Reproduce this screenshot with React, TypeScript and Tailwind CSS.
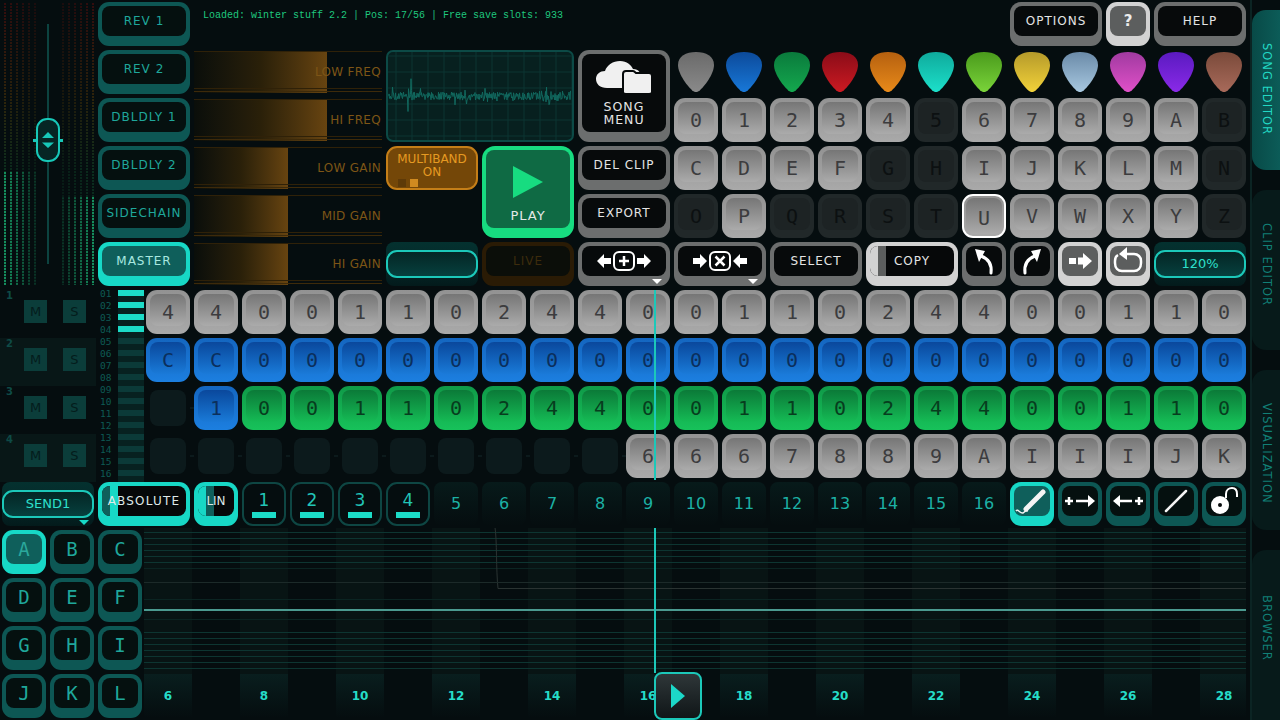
import React from 'react'

type Kind = 'gray' | 'dim' | 'blue' | 'green' | 'empty'

const KEY_STYLES: Record<Kind, { outer: string; face: string; text: string }> = {
  gray: { outer: 'bg-linear-to-b from-[#929292] to-[#a9a9a9]', face: 'bg-linear-to-b from-[#767676] to-[#ababab]', text: 'text-[#3c3c3e]' },
  dim: { outer: 'bg-[#212829]', face: 'bg-[#1d2324]', text: 'text-[#0c1011]' },
  blue: { outer: 'bg-linear-to-b from-[#1466c0] to-[#1c7fe0]', face: 'bg-linear-to-b from-[#0a489c] to-[#1a7ad8]', text: 'text-[#0b2f5c]' },
  green: { outer: 'bg-linear-to-b from-[#0f9a48] to-[#17c25a]', face: 'bg-linear-to-b from-[#0b7a38] to-[#15bb55]', text: 'text-[#073d1e]' },
  empty: { outer: 'bg-transparent', face: 'bg-[#0c1a1c]', text: 'text-transparent' },
}

const Key = ({ label, kind = 'gray', selected = false }: { label?: string; kind?: Kind; selected?: boolean }) => {
  const s = KEY_STYLES[kind]
  return (
    <div className={`h-11 w-11 rounded-[11px] ${selected ? 'border-2 border-white bg-[#1a1e1f] pt-[2px] px-[2px] pb-[2px]' : 'pt-1 px-1 pb-2'} ${s.outer}`}>
      <div className={`flex h-full w-full items-center justify-center rounded-lg pt-[3px] font-['DejaVu_Sans_Mono',monospace] text-[20px] leading-none ${s.face} ${s.text}`}>
        {label}
      </div>
    </div>
  )
}

const DarkCell = () => (
  <div className="relative h-11 w-11 p-1 after:absolute after:left-full after:top-[21px] after:h-0.5 after:w-1 after:bg-[#0c1a1c]">
    <div className="h-full w-full rounded-lg bg-[#0c1a1c]" />
  </div>
)

type BtnKind = 'teal' | 'tealOn' | 'gray' | 'grayOn' | 'live'

const BTN_STYLES: Record<BtnKind, { outer: string; face: string; text: string }> = {
  teal: { outer: 'bg-[#0d5754]', face: 'bg-[#05100f]', text: 'text-[#1fa79b]' },
  tealOn: { outer: 'bg-[#17d8c6]', face: 'bg-[#0f5f5b]', text: 'text-[#a8e8e0]' },
  gray: { outer: 'bg-[#6c6e6e]', face: 'bg-[#070a0b]', text: 'text-[#e4e4e4]' },
  grayOn: { outer: 'bg-[#d2d2d2]', face: 'bg-[#5c5e5e]', text: 'text-[#ececec]' },
  live: { outer: 'bg-[#2a1b05]', face: 'bg-[#0b0e09]', text: 'text-[#3d2c0c]' },
}

const Btn = ({ kind = 'teal', wide = false, letter = false, className = '', children }: {
  kind?: BtnKind; wide?: boolean; letter?: boolean; className?: string; children?: React.ReactNode
}) => {
  const s = BTN_STYLES[kind]
  return (
    <div className={`${wide ? 'col-span-2' : ''} rounded-[11px] pt-1 px-1 pb-[10px] ${s.outer} ${className}`}>
      <div className={`flex h-full w-full items-center justify-center overflow-hidden rounded-lg ${letter ? "font-['DejaVu_Sans_Mono',monospace] text-[19px]" : 'text-[12px] tracking-[1px]'} ${s.face} ${s.text}`}>
        {children}
      </div>
    </div>
  )
}

// buttons with a latched strip on the left of the face
const Striped = ({ kind, wide = false, children, strip, text }: {
  kind: BtnKind; wide?: boolean; children: React.ReactNode; strip: React.ReactNode; text: string
}) => (
  <div className={`${wide ? 'col-span-2' : ''} rounded-[11px] pt-1 px-1 pb-[10px] ${BTN_STYLES[kind].outer}`}>
    <div className="relative flex h-full w-full items-center justify-center overflow-hidden rounded-lg bg-[#060809]">
      <div className="absolute inset-y-0 left-0 flex">{strip}</div>
      <span className={`relative text-[12px] ${text}`}>{children}</span>
    </div>
  </div>
)

const Field = ({ text, triangle = false }: { text?: string; triangle?: boolean }) => (
  <div className="relative col-span-2 flex items-center rounded-lg bg-linear-to-b from-[#04312f] via-[#052a2a] to-[#031a1b]">
    <div className="flex h-7 w-full items-center justify-center rounded-[11px] border-2 border-[#1cc8b9] bg-linear-to-b from-[#042625] to-[#06403e] text-[13px] text-[#2de0cc]">
      {text}
    </div>
    {triangle && <div className="absolute bottom-[1px] right-[5px] h-0 w-0 border-x-[5px] border-t-[5px] border-x-transparent border-t-[#17d8c6]" />}
  </div>
)

const MenuTriangle = () => (
  <div className="absolute bottom-[2px] right-[8px] h-0 w-0 border-x-[5px] border-t-[5px] border-x-transparent border-t-white" />
)

const PICKS: [string, string][] = [
  ['#6a6a6a', '#8a8a8a'], ['#0c4a9a', '#1878d8'], ['#0a7a3c', '#14a84e'], ['#8a0c18', '#cc1a22'],
  ['#b5600f', '#e88a1a'], ['#0faa9c', '#1ce0ca'], ['#4a9a1c', '#7ad43a'], ['#b59a2a', '#f2d23a'],
  ['#6a8aa8', '#a8c8e0'], ['#a03aa0', '#e050c8'], ['#5a1ac0', '#8a2ae8'], ['#7a4a3a', '#a86a5a'],
]

const Pick = ({ top, bottom, id }: { top: string; bottom: string; id: string }) => (
  <div className="flex items-start justify-center pt-[2px]">
    <svg width="36" height="40" viewBox="0 0 36 40">
      <defs>
        <linearGradient id={id} x1="0" y1="0" x2="0" y2="1">
          <stop offset="0" stopColor={top} />
          <stop offset="1" stopColor={bottom} />
        </linearGradient>
      </defs>
      <path d="M18 0C28 0 36 4 36 13C36 22 26 35 21 39C19 40.500 17 40.500 15 39C10 35 0 22 0 13C0 4 8 0 18 0Z" fill={`url(#${id})`} />
    </svg>
  </div>
)

const Slider = ({ label, fill }: { label: string; fill: string }) => (
  <div className="relative col-span-4 overflow-hidden">
    <div className={`absolute left-0 top-[1px] h-[42px] bg-linear-to-r from-[#0a0e0a] via-[#2a2009] to-[#684410] ${fill}`} />
    <div className="absolute inset-x-0 top-[1px] h-px bg-[#2f2108]" />
    <div className="absolute inset-x-0 top-[38px] h-px bg-[#2f2108]" />
    <div className="absolute inset-x-0 top-[41px] h-px bg-[#3d2a0a]" />
    <div className="relative flex h-full items-center justify-end pr-px text-[12px] tracking-[0.3px] text-[#7d5516]">{label}</div>
  </div>
)

const makeWave = () => {
  let seed = 17
  const rnd = () => {
    seed = (seed * 16807) % 2147483647
    return seed / 2147483647
  }
  let d = 'M1 44'
  for (let x = 1; x < 183; x += 0.5) {
    const r = rnd()
    const amp = r > 0.985 ? 44 : r > 0.9 ? 18 : 8
    const y = 44 + (rnd() - 0.5) * amp * (x > 150 ? 1.3 : 1)
    d += `L${x} ${y.toFixed(1)}`
  }
  return d
}

const Wave = () => (
  <div className="col-span-4 row-span-2 overflow-hidden rounded-[7px] border-2 border-[#0c4a46] bg-[#07201f]">
    <svg width="184" height="88" viewBox="0 0 184 88" className="block">
      {[...Array(12)].map((_, i) => <line key={i} x1={i * 16 + 8} y1="0" x2={i * 16 + 8} y2="88" stroke="#0d3533" />)}
      {[...Array(6)].map((_, i) => <line key={i} x1="0" y1={i * 16 + 4} x2="184" y2={i * 16 + 4} stroke="#0d3533" />)}
      <path d={makeWave()} fill="none" stroke="#12695f" strokeWidth="1" />
    </svg>
  </div>
)

const Meter = () => {
  const bars = [4, 10, 16, 22, 28, 34, 62, 68, 74, 80, 86, 92]
  return (
    <div className="col-span-2 row-span-6">
      <svg width="96" height="286" viewBox="0 0 96 286" className="block -ml-0.5 -mt-0.5">
        <defs>
          <linearGradient id="meterDim" x1="0" y1="0" x2="0" y2="286" gradientUnits="userSpaceOnUse">
            <stop offset="0" stopColor="#340c0e" />
            <stop offset="0.35" stopColor="#2e240b" />
            <stop offset="0.6" stopColor="#0b2e1e" />
            <stop offset="1" stopColor="#08241c" />
          </linearGradient>
        </defs>
        {bars.map((x, i) => {
          const lit = i < 6 ? 172 : 197
          const fade = i < 6 ? i * 0.1 : (11 - i) * 0.1
          return (
            <g key={x}>
              <line x1={x + 1} y1="3" x2={x + 1} y2="285" stroke="url(#meterDim)" strokeWidth="2" strokeDasharray="2 1" opacity={1 - fade} />
              <line x1={x + 1} y1={lit} x2={x + 1} y2="285" stroke="#179a66" strokeWidth="2" strokeDasharray="2 1" opacity={0.9 - fade * 1.4} />
            </g>
          )
        })}
        <line x1="48" y1="24" x2="48" y2="264" stroke="#0c4340" strokeWidth="2" />
        <rect x="33" y="139" width="30" height="3" fill="#17c8b8" />
        <rect x="37" y="119" width="22" height="42" rx="10" fill="#062624" stroke="#17c8b8" strokeWidth="2" />
        <path d="M48 132L42 138H54ZM48 148L42 142.500H54Z" fill="#17c8b8" />
      </svg>
    </div>
  )
}

const CloudIcon = () => (
  <svg width="58" height="34" viewBox="0 0 58 34" className="block">
    <path d="M12 28C5 28 1 24 1 19C1 14 5 11 10 11C12 5 18 1 25 1C32 1 36 5 38 9C44 9 46 13 46 18V28Z" fill="#f0f0f0" />
    <path d="M28 14C28 12 29 11 31 11H38C39 11 40 12 41 13H54C56 13 57 14 57 16V32C57 33 56 34 54 34H31C29 34 28 33 28 32Z" fill="#f0f0f0" stroke="#070a0b" strokeWidth="2" />
  </svg>
)

const AddIcon = ({ cross = false }: { cross?: boolean }) => (
  <svg width="54" height="20" viewBox="0 0 54 20" className="block">
    {cross ? (
      <path d="M14 10L7 3V7H0V13H7V17ZM40 10L47 3V7H54V13H47V17Z" fill="#fff" />
    ) : (
      <path d="M0 10L7 3V7H14V13H7V17ZM54 10L47 3V7H40V13H47V17Z" fill="#fff" />
    )}
    <rect x="17" y="1" width="20" height="18" rx="5" fill="none" stroke="#fff" strokeWidth="2" />
    <path d={cross ? 'M22.500 5.500L31.500 14.500M31.500 5.500L22.500 14.500' : 'M27 5V15M22 10H32'} stroke="#fff" strokeWidth="2.500" />
  </svg>
)

const TurnIcon = ({ flip = false }: { flip?: boolean }) => (
  <svg width="28" height="28" viewBox="0 0 28 28" className={`block ${flip ? '-scale-x-100' : ''}`}>
    <path d="M21 26C22 18 19 12 11 9" fill="none" stroke="#fff" strokeWidth="3" strokeLinecap="round" />
    <path d="M5 2L15 4L9 15Z" fill="#fff" />
  </svg>
)

const ForwardIcon = () => (
  <svg width="24" height="16" viewBox="0 0 24 16" className="block">
    <rect x="1" y="5" width="7" height="6" fill="#fff" />
    <path d="M24 8L15 0V4.500H10V11.500H15V16Z" fill="#fff" />
  </svg>
)

const LoopIcon = () => (
  <svg width="30" height="30" viewBox="0 0 30 30" className="block">
    <path d="M13 8H21C25 8 28 11 28 15V17C28 22 25 25 21 25H9C5 25 2 22 2 17V15C2 12 3 10 5 9" fill="none" stroke="#fff" strokeWidth="2.500" />
    <path d="M14 1L6 8L14 14Z" fill="#fff" />
  </svg>
)

const PenIcon = () => (
  <svg width="34" height="30" viewBox="0 0 34 30" className="block">
    <path d="M11 23L28 6" stroke="#f4f4f4" strokeWidth="5" strokeLinecap="round" />
    <path d="M1 25C3 22 5 28 8 27C10 26 10 24 13 25" fill="none" stroke="#f4f4f4" strokeWidth="1.500" />
  </svg>
)

const PlusArrow = ({ flip = false }: { flip?: boolean }) => (
  <svg width="32" height="14" viewBox="0 0 32 14" className={`block ${flip ? '-scale-x-100' : ''}`}>
    <path d="M1 7H9M5 3V11M12 7H28" stroke="#fff" strokeWidth="2.500" />
    <path d="M31 7L24 1V13Z" fill="#fff" />
  </svg>
)

const SlashIcon = () => (
  <svg width="26" height="26" viewBox="0 0 26 26" className="block">
    <path d="M3 23L23 3" stroke="#f4f4f4" strokeWidth="2.500" strokeLinecap="round" />
  </svg>
)

const LockIcon = () => (
  <svg width="30" height="30" viewBox="0 0 30 30" className="block">
    <path d="M17 12V8C17 4 20 2 23 2C26 2 28 4 28 8V11" fill="none" stroke="#fff" strokeWidth="2" />
    <circle cx="11" cy="19" r="9" fill="#fff" />
    <circle cx="11" cy="19" r="2" fill="#070a0b" />
  </svg>
)

const Tab = ({ label, active = false, tall = false }: { label: string; active?: boolean; tall?: boolean }) => (
  <div className={`flex shrink-0 justify-center rounded-l-[14px] pt-[33px] ${tall ? 'h-[190px] pt-[45px]' : 'h-40'} ${active ? 'bg-linear-to-r from-[#084a47] to-[#0c5c58] text-[#22d8c4]' : 'bg-[#071a1a] text-[#117f76]'}`}>
    <span className="text-[11.500px] leading-none tracking-[1px] [writing-mode:vertical-rl]">{label}</span>
  </div>
)

const Graph = () => {
  const lines = [532, 538, 544, 550, 556, 562, 632, 638, 644, 650, 656, 662, 668]
  const faint = [568, 599, 619]
  return (
    <svg width="1102" height="146" viewBox="0 528 1102 146" className="block shrink-0">
      {[...Array(12)].map((_, i) => <rect key={i} x={i * 96} y="528" width="48" height="146" fill="#081414" />)}
      {lines.map(y => <line key={y} x1="0" y1={y + 0.5} x2="1102" y2={y + 0.5} stroke="#0d3531" />)}
      {faint.map(y => <line key={y} x1="0" y1={y + 0.5} x2="1102" y2={y + 0.5} stroke="#0b2422" />)}
      <path d="M0 527.500H351C353 540 352 570 354 588.500H1102" fill="none" stroke="#2a3332" />
      <line x1="0" y1="582.500" x2="1102" y2="582.500" stroke="#1c2a29" />
      <line x1="0" y1="610" x2="1102" y2="610" stroke="#4b9a90" strokeWidth="2" />
    </svg>
  )
}

const GRAY_ROW = '4 4 0 0 1 1 0 2 4 4 0 0 1 1 0 2 4 4 0 0 1 1 0'.split(' ')
const GREEN_ROW = '0 0 1 1 0 2 4 4 0 0 1 1 0 2 4 4 0 0 1 1 0'.split(' ')
const LAST_ROW = '6 6 6 7 8 8 9 A I I I J K'.split(' ')
const ROW_ONE = '0 1 2 3 4 5 6 7 8 9 A B'.split(' ')
const ROW_TWO = 'C D E F G H I J K L M N'.split(' ')
const ROW_THREE = 'O P Q R S T U V W X Y Z'.split(' ')
const DIM = 'B 5 G H N O Q R S T Z'.split(' ')

export default function App() {
  const letterKey = (c: string) => <Key key={c} label={c} kind={DIM.includes(c) ? 'dim' : 'gray'} selected={c === 'U'} />

  return (
    <div className="relative flex h-[720px] w-[1280px] overflow-hidden bg-[#050d0f] font-['DejaVu_Sans',sans-serif] select-none">
      <div className="grid h-[720px] w-[1250px] shrink-0 grid-cols-[repeat(26,44px)] grid-rows-[repeat(15,44px)] gap-1 p-0.5">
        {/* row 1 */}
        <Meter />
        <Btn wide>REV 1</Btn>
        <div className="col-span-17 pl-[9px] pt-[8px] font-['Liberation_Mono',monospace] text-[10px] leading-[12px] text-[#1fc77e]">
          Loaded: winter stuff 2.2 | Pos: 17/56 | Free save slots: 933
        </div>
        <Btn kind="gray" wide>OPTIONS</Btn>
        <Btn kind="grayOn"><span className="text-[15px] font-bold tracking-normal">?</span></Btn>
        <Btn kind="gray" wide>HELP</Btn>

        {/* row 2 */}
        <Btn wide>REV 2</Btn>
        <Slider label="LOW FREQ" fill="w-[133px]" />
        <Wave />
        <Btn kind="gray" wide className="row-span-2">
          <div className="flex flex-col items-center">
            <CloudIcon />
            <div className="mt-[6px] text-center text-[12.500px] leading-[13px]">SONG<br />MENU</div>
          </div>
        </Btn>
        {PICKS.map(([top, bottom], i) => <Pick key={i} id={`pick${i}`} top={top} bottom={bottom} />)}

        {/* row 3 */}
        <Btn wide>DBLDLY 1</Btn>
        <Slider label="HI FREQ" fill="w-[133px]" />
        {ROW_ONE.map(letterKey)}

        {/* row 4 */}
        <Btn wide>DBLDLY 2</Btn>
        <Slider label="LOW GAIN" fill="w-[94px]" />
        <div className="relative col-span-2 flex flex-col items-center rounded-[11px] border-2 border-[#c47e18] bg-[#744708] pt-[5px] text-[12px] leading-[13px] text-[#e59a22]">
          <span>MULTIBAND</span>
          <span>ON</span>
          <div className="absolute bottom-[1px] left-[10px] flex gap-1">
            <div className="h-2 w-2 bg-[#5e3a08]" />
            <div className="h-2 w-2 bg-[#d08a20]" />
          </div>
        </div>
        <div className="col-span-2 row-span-2 rounded-[13px] bg-[#17dc80] pt-1 px-1 pb-[10px]">
          <div className="flex h-full w-full flex-col items-center rounded-lg bg-[#0f6a44] pt-4">
            <svg width="30" height="32" viewBox="0 0 30 32" className="block"><path d="M0 0L30 16L0 32Z" fill="#17dc80" /></svg>
            <div className="mt-[11px] text-[13px] leading-none tracking-[1px] text-[#e4e8e6]">PLAY</div>
          </div>
        </div>
        <Btn kind="gray" wide>DEL CLIP</Btn>
        {ROW_TWO.map(letterKey)}

        {/* row 5 */}
        <Btn wide>SIDECHAIN</Btn>
        <Slider label="MID GAIN" fill="w-[94px]" />
        <div className="col-span-2" />
        <Btn kind="gray" wide>EXPORT</Btn>
        {ROW_THREE.map(letterKey)}

        {/* row 6 */}
        <Btn kind="tealOn" wide>MASTER</Btn>
        <Slider label="HI GAIN" fill="w-[94px]" />
        <Field />
        <Btn kind="live" wide>LIVE</Btn>
        <div className="relative col-span-2 rounded-[11px] bg-[#6c6e6e] pt-1 px-1 pb-[10px]">
          <div className="flex h-full w-full items-center justify-center rounded-lg bg-[#070a0b]"><AddIcon /></div>
          <MenuTriangle />
        </div>
        <div className="relative col-span-2 rounded-[11px] bg-[#6c6e6e] pt-1 px-1 pb-[10px]">
          <div className="flex h-full w-full items-center justify-center rounded-lg bg-[#070a0b]"><AddIcon cross /></div>
          <MenuTriangle />
        </div>
        <Btn kind="gray" wide>SELECT</Btn>
        <Striped
          kind="grayOn"
          wide
          text="tracking-[1px] text-[#e4e4e4]"
          strip={<><div className="w-2 bg-[#d2d2d2]" /><div className="w-2 bg-[#5c5e5e]" /></>}
        >
          COPY
        </Striped>
        <Btn kind="gray"><TurnIcon /></Btn>
        <Btn kind="gray"><TurnIcon flip /></Btn>
        <Btn kind="grayOn"><ForwardIcon /></Btn>
        <Btn kind="grayOn"><LoopIcon /></Btn>
        <Field text="120%" />

        {/* rows 7-10 */}
        <div className="col-span-2 row-span-4 -ml-0.5 flex w-[96px] flex-col">
          {['1', '2', '3', '4'].map((n, i) => (
            <div key={n} className={`flex h-12 shrink-0 items-start gap-4 pl-[6px] ${i % 2 ? 'bg-[#081717]' : ''}`}>
              <span className="-mr-[7px] w-[9px] pt-[1px] text-[10px] leading-[10px] font-bold text-[#0e4a46]">{n}</span>
              <div className="mt-[10px] flex h-[23px] w-[23px] items-center justify-center bg-[#0b3d3a] text-[13px] text-[#041c1c]">M</div>
              <div className="mt-[10px] flex h-[23px] w-[23px] items-center justify-center bg-[#0b3d3a] text-[13px] text-[#041c1c]">S</div>
            </div>
          ))}
        </div>
        <div className="row-span-4 flex w-[46px] flex-col">
          {[...Array(16)].map((_, i) => (
            <div key={i} className="flex h-3 shrink-0 items-start">
              <span className="w-5 pl-0.5 font-['DejaVu_Sans_Mono',monospace] text-[9.500px] leading-[8px] text-[#0e5a54]">{String(i + 1).padStart(2, '0')}</span>
              <div className="h-3 w-[26px] bg-[#072120]">
                <div className={`h-[6px] ${i < 4 ? 'bg-[#1cdcc8]' : 'bg-[#0b3a38]'}`} />
              </div>
            </div>
          ))}
        </div>
        {GRAY_ROW.map((v, i) => <Key key={`a${i}`} label={v} />)}
        {GRAY_ROW.map((_, i) => <Key key={`b${i}`} label={i < 2 ? 'C' : '0'} kind="blue" />)}
        <DarkCell />
        <Key label="1" kind="blue" />
        {GREEN_ROW.map((v, i) => <Key key={`c${i}`} label={v} kind="green" />)}
        {[...Array(10)].map((_, i) => <DarkCell key={`d${i}`} />)}
        {LAST_ROW.map((v, i) => <Key key={`e${i}`} label={v} />)}

        {/* row 11 */}
        <Field text="SEND1" triangle />
        <Striped
          kind="tealOn"
          wide
          text="tracking-[1.2px] text-[#dfe9e8]"
          strip={<><div className="w-2 bg-[#0f5f5b]" /><div className="w-2 bg-[#17d8c6]" /></>}
        >
          ABSOLUTE
        </Striped>
        <Striped
          kind="tealOn"
          text="text-[#dfe9e8]"
          strip={<><div className="w-2 bg-[#17d8c6]" /><div className="w-2 bg-[#0f5f5b]" /></>}
        >
          LIN
        </Striped>
        {['1', '2', '3', '4'].map(n => (
          <div key={n} className="flex flex-col items-center rounded-[11px] border-2 border-[#0e4643] pt-[6px] text-[17px] leading-[20px] text-[#22c4b6]">
            {n}
            <div className="mt-[2px] h-[6px] w-6 bg-[#1cdcc8]" />
          </div>
        ))}
        {['5', '6', '7', '8', '9', '10', '11', '12', '13', '14', '15', '16'].map(n => (
          <div key={n} className="flex items-center justify-center rounded-lg bg-linear-to-b from-[#071a1a] to-[#050d0f] text-[16px] text-[#1cb0a4]">{n}</div>
        ))}
        <Btn kind="tealOn"><PenIcon /></Btn>
        <Btn><PlusArrow /></Btn>
        <Btn><PlusArrow flip /></Btn>
        <Btn><SlashIcon /></Btn>
        <Btn><LockIcon /></Btn>

        {/* rows 12-15 */}
        <Btn kind="tealOn" letter><span className="text-[#2aa89c]">A</span></Btn>
        <Btn letter>B</Btn>
        <Btn letter>C</Btn>
        <div className="col-span-23 row-span-4 -ml-0.5 -mt-0.5 flex h-[190px] w-[1102px] flex-col overflow-hidden">
          <Graph />
          <div className="flex flex-1">
            {[...Array(23)].map((_, i) => (
              <div key={i} className={`flex h-full w-12 shrink-0 items-center justify-center text-[12px] font-bold text-[#25dcc8] ${i % 2 ? '' : 'bg-linear-to-b from-[#091e1e] to-[#050d0f]'}`}>
                {i % 2 ? '' : i + 6}
              </div>
            ))}
          </div>
        </div>
        {'DEFGHIJKL'.split('').map(c => <Btn key={c} letter>{c}</Btn>)}
      </div>

      {/* side tabs */}
      <div className="flex flex-1 flex-col gap-5 border-l-2 border-[#0b2423] pt-[10px]">
        <Tab label="SONG EDITOR" active />
        <Tab label="CLIP EDITOR" />
        <Tab label="VISUALIZATION" />
        <Tab label="BROWSER" tall />
      </div>

      {/* playhead */}
      <div className="absolute left-[654px] top-[290px] h-[190px] w-0.5 bg-[#1cc8b9]" />
      <div className="absolute left-[654px] top-[528px] h-[145px] w-0.5 bg-[#1cc8b9]" />
      <div className="absolute left-[654px] top-[672px] flex h-[48px] w-[48px] items-center justify-center rounded-lg border-2 border-[#1cc8b9] bg-linear-to-b from-[#2f3739] to-[#101618]">
        <svg width="14" height="24" viewBox="0 0 14 24" className="block"><path d="M0 0L14 12L0 24Z" fill="#1cd8c8" /></svg>
      </div>
    </div>
  )
}
